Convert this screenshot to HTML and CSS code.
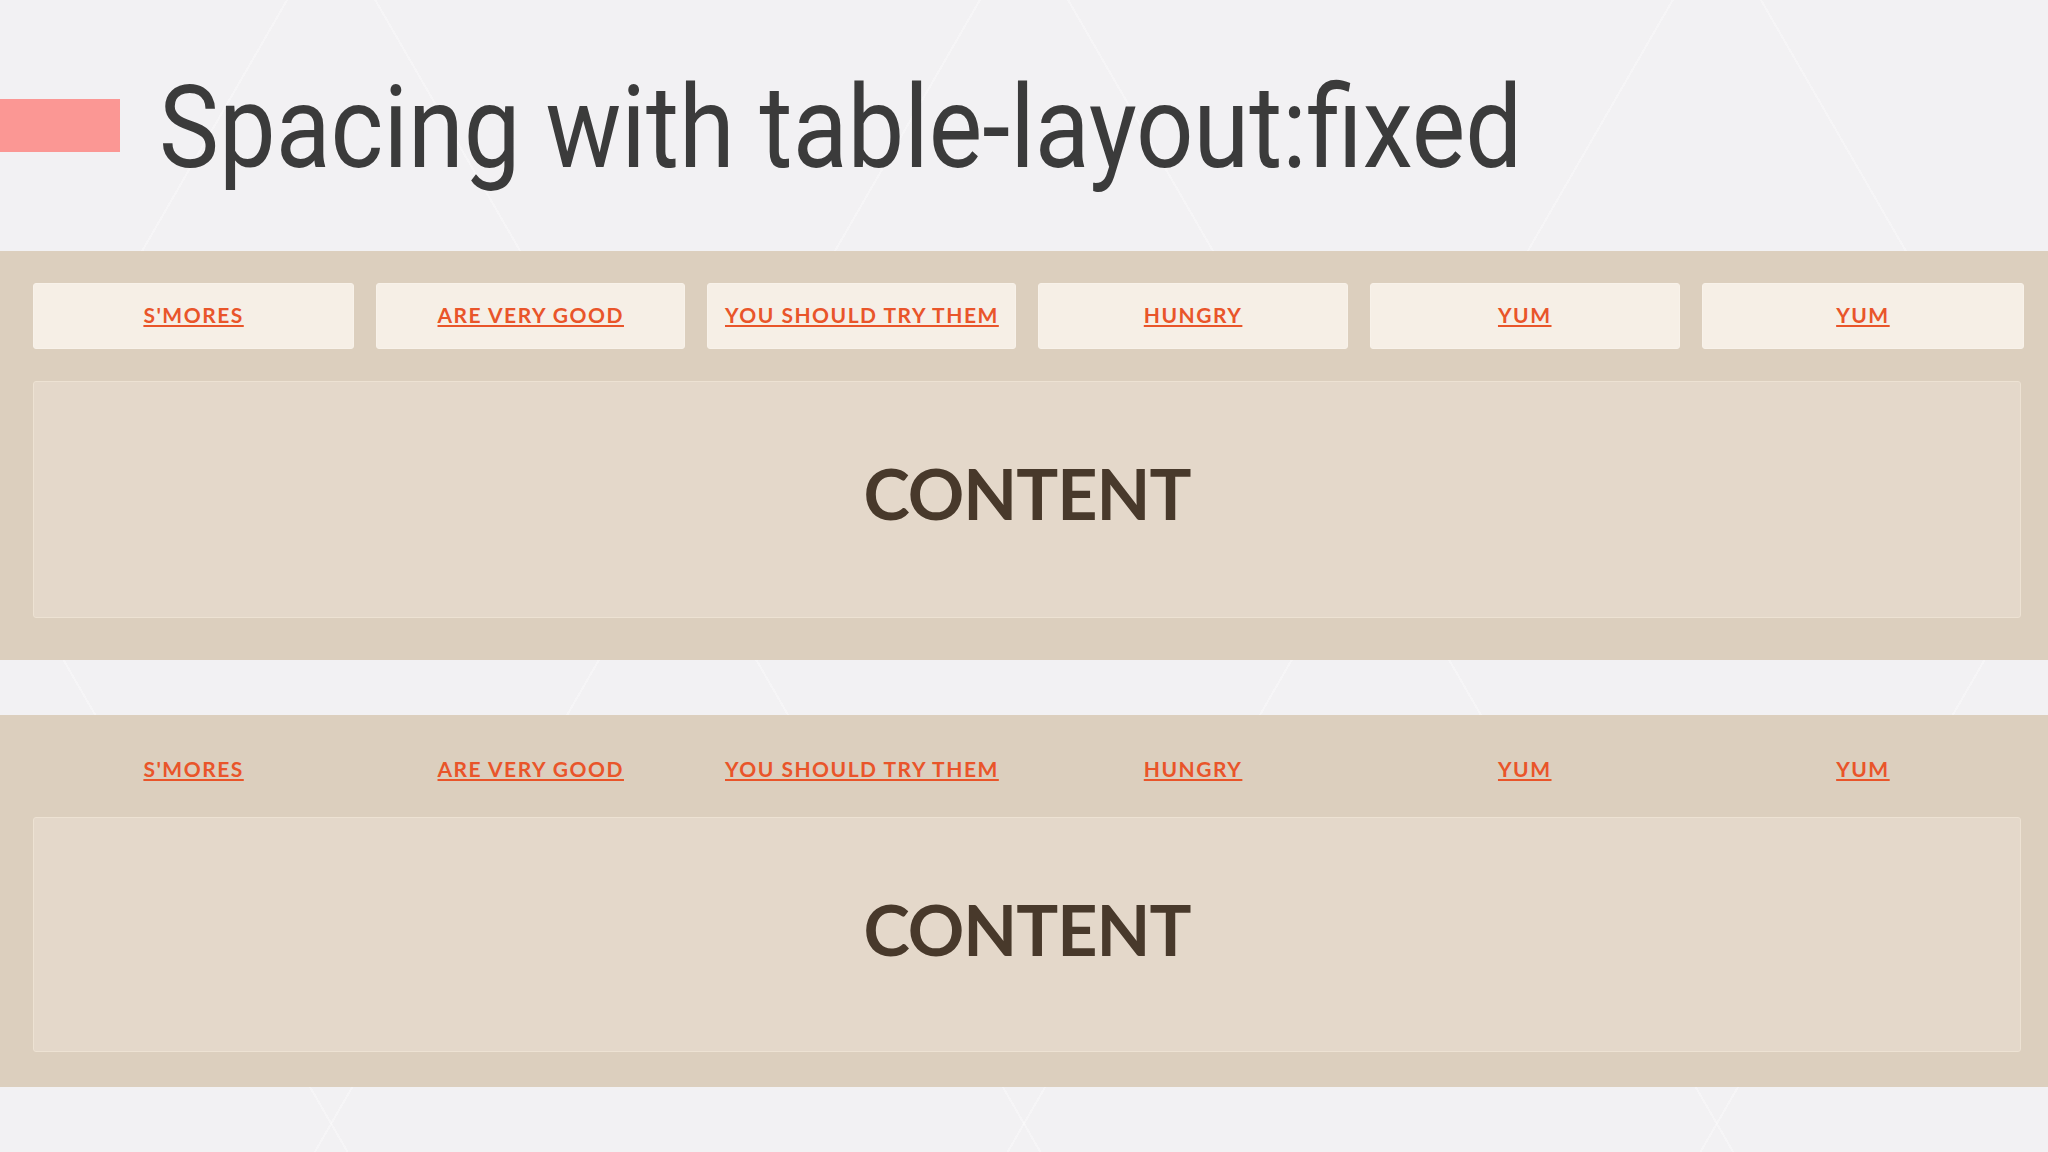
FILE: index.html
```html
<!DOCTYPE html>
<html lang="en">
<head>
<meta charset="utf-8">
<title>Spacing with table-layout:fixed</title>
<link rel="stylesheet" href="styles.css">
</head>
<body>
<header class="title-row">
  <span class="accent"></span>
  <h1 class="title">Spacing with table-layout:fixed</h1>
</header>

<section class="band band-one">
  <nav class="tabs">
    <a class="tab boxed" href="#">S'MORES</a>
    <a class="tab boxed" href="#">ARE VERY GOOD</a>
    <a class="tab boxed" href="#">YOU SHOULD TRY THEM</a>
    <a class="tab boxed" href="#">HUNGRY</a>
    <a class="tab boxed" href="#">YUM</a>
    <a class="tab boxed" href="#">YUM</a>
  </nav>
  <div class="content">CONTENT</div>
</section>

<div class="gap-strip"></div>

<section class="band band-two">
  <nav class="tabs">
    <a class="tab plain" href="#">S'MORES</a>
    <a class="tab plain" href="#">ARE VERY GOOD</a>
    <a class="tab plain" href="#">YOU SHOULD TRY THEM</a>
    <a class="tab plain" href="#">HUNGRY</a>
    <a class="tab plain" href="#">YUM</a>
    <a class="tab plain" href="#">YUM</a>
  </nav>
  <div class="content">CONTENT</div>
</section>
</body>
</html>
```
FILE: styles.css
```css
html, body {
  margin: 0;
  padding: 0;
}

body {
  width: 2048px;
  height: 1152px;
  overflow: hidden;
  background-color: #f2f1f3;
  background-image:
    repeating-linear-gradient(60deg, rgba(255,255,255,0) 0 300px, rgba(255,255,255,0.3) 300px 302px, rgba(255,255,255,0) 302px 600px),
    repeating-linear-gradient(-60deg, rgba(255,255,255,0) 0 300px, rgba(255,255,255,0.3) 300px 302px, rgba(255,255,255,0) 302px 600px);
  font-family: "Lato", "Open Sans", sans-serif;
}

.title-row {
  box-sizing: border-box;
  height: 251px;
  padding-top: 70px;
  display: flex;
  align-items: flex-start;
}

.accent {
  flex: none;
  width: 120px;
  height: 53px;
  margin-top: 29px;
  background: #fb9794;
}

.title {
  margin: 0 0 0 39px;
  font-family: "Roboto", sans-serif;
  font-weight: 400;
  font-size: 115px;
  line-height: 115px;
  color: #3b3b3b;
  white-space: nowrap;
  transform: scaleX(0.878);
  transform-origin: left center;
}

.band {
  background: #dccfbe;
  padding: 0 27px 0 33px;
}

.band-one {
  padding-top: 32px;
  padding-bottom: 42px;
}

.band-two {
  padding-top: 22px;
  padding-bottom: 35px;
}

.gap-strip {
  height: 55px;
}

.tabs {
  display: grid;
  grid-template-columns: 321fr 309fr 309fr 309fr 310fr 322fr;
  column-gap: 22px;
  margin-right: -3px;
}

.tab {
  display: flex;
  align-items: center;
  justify-content: center;
  box-sizing: border-box;
  font-family: "Lato", sans-serif;
  font-weight: 700;
  font-size: 21px;
  line-height: 21px;
  letter-spacing: 1.5px;
  color: #e9552a;
  text-decoration: underline;
  text-decoration-thickness: 2px;
  text-underline-offset: 2px;
  white-space: nowrap;
}

.boxed {
  height: 66px;
  padding-bottom: 4px;
  background: #f6efe6;
  border: 1px solid #f8f2ea;
  border-radius: 3px;
}

.plain {
  height: 64px;
  padding-bottom: 2px;
}

.content {
  box-sizing: border-box;
  background: #e4d8ca;
  border: 1px solid #ede2d3;
  border-radius: 3px;
  text-align: center;
  font-family: "Lato", sans-serif;
  font-weight: 700;
  font-size: 70px;
  line-height: 70px;
  letter-spacing: -1px;
  color: #48392b;
}

.band-one .content {
  margin-top: 32px;
  height: 237px;
  padding-top: 76px;
}

.band-two .content {
  margin-top: 16px;
  height: 235px;
  padding-top: 76px;
}
```
